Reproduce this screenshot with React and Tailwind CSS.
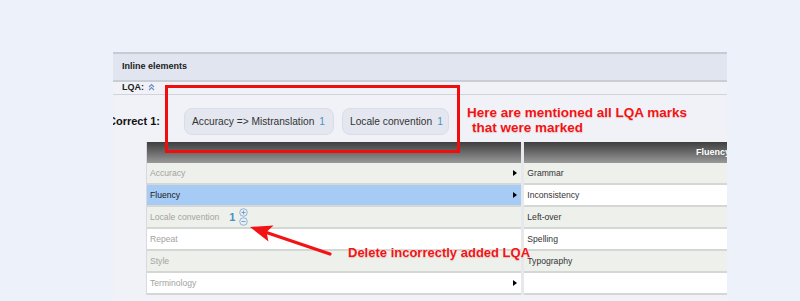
import { useState } from 'react';

const leftRows = [
  { label: "Accuracy", bg: "bg-[#eef0eb]", muted: true, arrow: true },
  { label: "Fluency", bg: "bg-[#a6cbf5]", muted: false, arrow: true },
  { label: "Locale convention", bg: "bg-[#eef0eb]", muted: true, count: 1 },
  { label: "Repeat", bg: "bg-white", muted: true },
  { label: "Style", bg: "bg-[#eef0eb]", muted: true },
  { label: "Terminology", bg: "bg-white", muted: true, arrow: true },
];

const rightRows = [
  { label: "Grammar", bg: "bg-[#eef0eb]" },
  { label: "Inconsistency", bg: "bg-white" },
  { label: "Left-over", bg: "bg-[#eef0eb]" },
  { label: "Spelling", bg: "bg-white" },
  { label: "Typography", bg: "bg-[#eef0eb]" },
  { label: "", bg: "bg-white" },
];

function Chip({ label, count, width }) {
  return (
    <div className={`${width} h-[27px] flex items-center gap-[5px] pl-[7px] rounded-[8px] bg-[#e4e7ef] border border-[#d9dde6] text-[10.2px] text-[#333]`}>
      <span>{label}</span>
      <span className="text-[#4b93c4]">{count}</span>
    </div>
  );
}

function Stepper() {
  return (
    <div className="flex flex-col gap-0">
      <svg width="9" height="9" viewBox="0 0 9 9">
        <circle cx="4.5" cy="4.5" r="3.8" fill="#e8eff8" stroke="#92b3d3" strokeWidth="1" />
        <path d="M2.5 4.5h4M4.5 2.5v4" stroke="#7d9fc2" strokeWidth="1" />
      </svg>
      <svg width="9" height="9" viewBox="0 0 9 9">
        <circle cx="4.5" cy="4.5" r="3.8" fill="#e8eff8" stroke="#92b3d3" strokeWidth="1" />
        <path d="M2.5 4.5h4" stroke="#7d9fc2" strokeWidth="1" />
      </svg>
    </div>
  );
}

export default function App() {
  const [selected] = useState("Fluency");

  return (
    <div className="relative w-[800px] h-[301px] overflow-hidden bg-[#edf2fa] font-['Liberation_Sans',Arial,sans-serif]">
      <div className="ml-[113px] pt-[52px] w-[614px]">
        <div className="h-[249px] bg-[#f1f2f7] overflow-hidden flex flex-col">
          <div className="h-[2px] bg-[#c7cad2]" />
          <div className="h-[26px] bg-[#e1e5f0] flex items-center pl-[9px] text-[9px] font-bold text-[#222]">
            Inline elements
          </div>
          <div className="h-[2px] bg-[#c9cdd6]" />
          <div className="h-[12px] flex items-center gap-[4px] pl-[9px] text-[9px] font-bold text-[#222]">
            <span>LQA:</span>
            <svg width="7" height="8" viewBox="0 0 7 8" className="mb-[2px]">
              <path d="M1 4L3.5 1.5L6 4M1 7L3.5 4.5L6 7" fill="none" stroke="#6d8cc9" strokeWidth="1.2" />
            </svg>
          </div>
          <div className="h-[1px] bg-[#d0d3da]" />

          <div className="flex items-center pt-[13px]">
            <div className="ml-[-5px] w-[76px] text-[11px] font-bold text-[#111]">Correct 1:</div>
            <div className="flex gap-[8px]">
              <Chip label="Accuracy => Mistranslation" count={1} width="w-[150px]" />
              <Chip label="Locale convention" count={1} width="w-[107px]" />
            </div>
          </div>

          <div className="ml-[33px] mt-[7px] flex gap-[3px] bg-[#e6e8ec] border-l border-[#d8dadf]">
            <div className="w-[375px] flex flex-col">
              <div className="h-[21px] bg-gradient-to-b from-[#3f3f3f] to-[#9a9a9a]" />
              {leftRows.map((row) => (
                <div
                  key={row.label}
                  className={`h-[22px] border-b-2 border-[#d5d7d5] flex items-center justify-between pl-[3px] pr-[4px] text-[8.6px] ${row.label === selected ? "bg-[#a6cbf5]" : row.bg}`}
                >
                  <div className="flex items-center">
                    <span className={row.muted ? "text-[#a3a3a3]" : "text-[#1a1a1a]"}>{row.label}</span>
                    {row.count ? (
                      <div className="flex items-center gap-[4px] ml-[10px]">
                        <span className="text-[11px] font-bold text-[#4b8fc2]">{row.count}</span>
                        <Stepper />
                      </div>
                    ) : null}
                  </div>
                  {row.arrow ? (
                    <div className="w-0 h-0 border-y-[3px] border-y-transparent border-l-[4px] border-l-black" />
                  ) : null}
                </div>
              ))}
            </div>
            <div className="w-[203px] flex flex-col">
              <div className="h-[21px] bg-gradient-to-b from-[#3f3f3f] to-[#9a9a9a] flex items-center justify-end overflow-hidden">
                <span className="mr-[-3px] text-[9px] font-bold text-white">Fluency</span>
              </div>
              {rightRows.map((row, i) => (
                <div key={i} className={`h-[22px] border-b-2 border-[#d5d7d5] flex items-center pl-[3px] text-[8.6px] text-[#333] ${row.bg}`}>
                  {row.label}
                </div>
              ))}
            </div>
          </div>
        </div>
      </div>

      {/* annotations */}
      <div className="absolute left-[165px] top-[85px] w-[295px] h-[68px] border-[3px] border-[#f20d0d]" />
      <div className="absolute left-[467px] top-[105px] text-[13.5px] leading-[15px] font-bold text-[#f21414] [text-shadow:0_0_2px_white,0_1px_1px_rgba(120,0,0,0.25)]">
        <div>Here are mentioned all LQA marks</div>
        <div className="pl-[5px]">that were marked</div>
      </div>
      <div className="absolute left-[348px] top-[245px] text-[13px] leading-[15px] font-bold text-[#f21414] [text-shadow:0_0_2px_white,0_1px_1px_rgba(120,0,0,0.25)]">
        Delete incorrectly added LQA
      </div>
      <svg className="absolute left-0 top-0" width="800" height="301" viewBox="0 0 800 301">
        <path d="M265 232L330 254" stroke="#f21414" strokeWidth="3.2" strokeLinecap="round" />
        <path d="M250 227L273.5 225.5L266.5 232L268.5 241.5Z" fill="#f21414" />
      </svg>
    </div>
  );
}
